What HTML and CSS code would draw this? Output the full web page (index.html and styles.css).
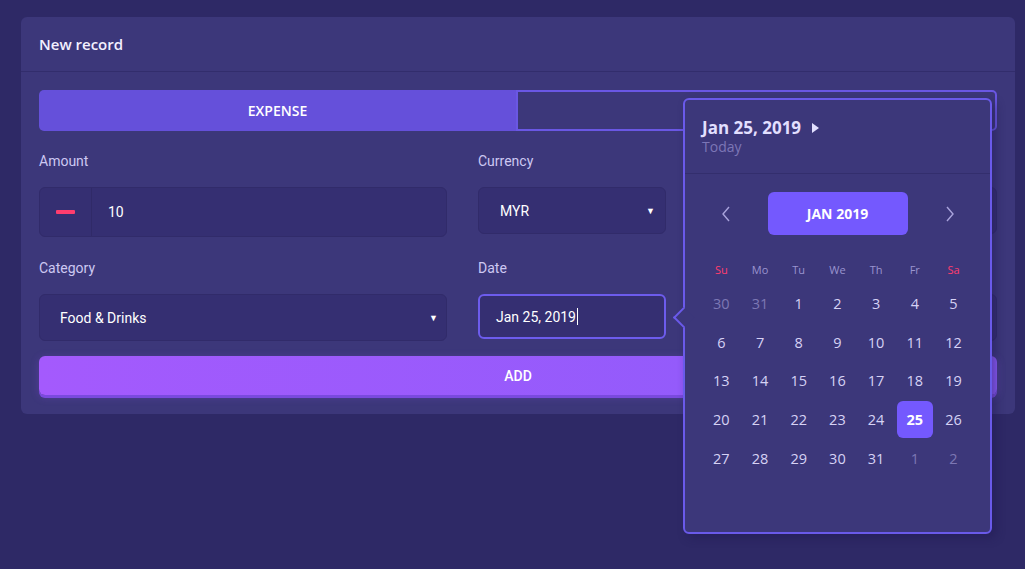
FILE: index.html
```html
<!DOCTYPE html>
<html>
<head>
<meta charset="utf-8">
<link rel="stylesheet" href="styles.css">
</head>
<body>
<div class="card">
  <div class="card-header">New record</div>
  <div class="card-body">
    <div class="toggle">
      <div class="tog tog-active">EXPENSE</div>
      <div class="tog tog-off"></div>
    </div>
    <div class="row">
      <div class="col c1">
        <div class="label">Amount</div>
        <div class="field amount">
          <div class="sign"><span class="minus"></span></div>
          <div class="val">10</div>
        </div>
      </div>
      <div class="col c2">
        <div class="label">Currency</div>
        <div class="field select"><span>MYR</span><span class="tri">▼</span></div>
      </div>
      <div class="col c3">
        <div class="label"></div>
        <div class="field select"></div>
      </div>
    </div>
    <div class="row row2">
      <div class="col c1">
        <div class="label">Category</div>
        <div class="field select sel2"><span>Food &amp; Drinks</span><span class="tri">▼</span></div>
      </div>
      <div class="col c2">
        <div class="label">Date</div>
        <div class="field date"><span>Jan 25, 2019</span><span class="caret"></span></div>
      </div>
      <div class="col c3">
        <div class="label"></div>
        <div class="field select sel2"></div>
      </div>
    </div>
    <div class="add">ADD</div>
  </div>
</div>

<div class="picker">
  <div class="pk-arrow"></div>
  <div class="pk-head">
    <div class="pk-date">Jan 25, 2019 <span class="pk-play"></span></div>
    <div class="pk-today">Today</div>
  </div>
  <div class="pk-nav">
    <svg class="chev" width="10" height="16" viewBox="0 0 10 16"><path d="M8 1 L2 8 L8 15" fill="none" stroke="#a9a3dc" stroke-width="1.4"/></svg>
    <div class="pk-month">JAN 2019</div>
    <svg class="chev" width="10" height="16" viewBox="0 0 10 16"><path d="M2 1 L8 8 L2 15" fill="none" stroke="#a9a3dc" stroke-width="1.4"/></svg>
  </div>
  <div class="pk-grid">
    <div class="wd red">Su</div><div class="wd">Mo</div><div class="wd">Tu</div><div class="wd">We</div><div class="wd">Th</div><div class="wd">Fr</div><div class="wd red">Sa</div>
    <div class="d mute">30</div><div class="d mute">31</div><div class="d">1</div><div class="d">2</div><div class="d">3</div><div class="d">4</div><div class="d">5</div>
    <div class="d">6</div><div class="d">7</div><div class="d">8</div><div class="d">9</div><div class="d">10</div><div class="d">11</div><div class="d">12</div>
    <div class="d">13</div><div class="d">14</div><div class="d">15</div><div class="d">16</div><div class="d">17</div><div class="d">18</div><div class="d">19</div>
    <div class="d">20</div><div class="d">21</div><div class="d">22</div><div class="d">23</div><div class="d">24</div><div class="d sel"><span>25</span></div><div class="d">26</div>
    <div class="d">27</div><div class="d">28</div><div class="d">29</div><div class="d">30</div><div class="d">31</div><div class="d mute">1</div><div class="d mute">2</div>
  </div>
</div>
</body>
</html>
```
FILE: styles.css
```css
* { box-sizing: border-box; }
html, body { margin: 0; padding: 0; }
body {
  background: #2e2966;
  width: 1025px;
  height: 569px;
  overflow: hidden;
  font-family: Roboto, "Liberation Sans", sans-serif;
  color: #ffffff;
  padding: 17px 0 0 21px;
  position: relative;
}
.card {
  width: 994px;
  background: #3c377a;
  border-radius: 6px;
}
.card-header {
  height: 55px;
  padding: 0 18px;
  display: flex;
  align-items: center;
  font-family: "Open Sans", sans-serif;
  font-size: 15px;
  font-weight: 600;
  color: #f2f0ff;
  border-bottom: 1px solid #322d6c;
}
.card-body {
  padding: 18px 18px 19px;
}
.toggle {
  display: flex;
  height: 41px;
}
.tog {
  flex: 1;
  display: flex;
  align-items: center;
  justify-content: center;
  font-family: "Open Sans", sans-serif;
  font-size: 14px;
  font-weight: 600;
}
.tog-active {
  background: #6550da;
  border-radius: 5px 0 0 5px;
}
.tog-off {
  border: 2px solid #6a57e4;
  border-radius: 0 5px 5px 0;
  color: #8d85d8;
}
.row {
  display: flex;
  gap: 31px;
  margin-top: 21px;
}
.row2 { margin-top: 22px; }
.col { display: flex; flex-direction: column; }
.c1 { width: 408px; }
.c2 { width: 188px; }
.c3 { width: 300px; }
.label {
  font-size: 14px;
  color: #cdc8f2;
  height: 18px;
  line-height: 18px;
  margin-bottom: 17px;
}
.field {
  background: #352f72;
  border: 1px solid #312b6a;
  border-radius: 6px;
  display: flex;
  align-items: center;
  font-size: 14px;
  color: #ffffff;
}
.amount { height: 50px; }
.sign {
  width: 52px;
  height: 100%;
  border-right: 1px solid #302a68;
  display: flex;
  align-items: center;
  justify-content: center;
}
.minus {
  width: 19px;
  height: 4px;
  background: #ff3d6e;
  border-radius: 1px;
}
.val { padding-left: 16px; }
.select {
  height: 47px;
  justify-content: space-between;
  padding: 0 10px 0 21px;
}
.sel2 { padding-left: 20px; padding-right: 8px; }
.tri { font-size: 9px; color: #ffffff; }
.date {
  height: 45px;
  border: 2px solid #6d5ced;
  padding-left: 16px;
}
.caret {
  display: inline-block;
  width: 1px;
  height: 17px;
  background: #ffffff;
  margin-left: 1px;
}
.add {
  margin-top: 15px;
  height: 39px;
  border-radius: 6px;
  background: linear-gradient(90deg, #a45afd 0%, #8c5bfa 100%);
  box-shadow: 0 3px 0 #7a4ade, 0 2px 8px rgba(160, 90, 250, 0.25);
  display: flex;
  align-items: center;
  justify-content: center;
  font-size: 14px;
  font-weight: 500;
}
.picker {
  position: absolute;
  left: 683px;
  top: 98px;
  width: 309px;
  height: 436px;
  background: #3c377a;
  border: 2px solid #6a5aea;
  border-radius: 6px;
  box-shadow: 4px 4px 10px rgba(30, 25, 80, 0.45);
  font-family: "Open Sans", sans-serif;
}
.pk-arrow {
  position: absolute;
  left: -9px;
  top: 210px;
  width: 15px;
  height: 15px;
  background: #3c377a;
  border-left: 2px solid #6a5aea;
  border-bottom: 2px solid #6a5aea;
  transform: rotate(45deg);
}
.pk-head {
  height: 74px;
  padding: 16px 17px 0;
  border-bottom: 1px solid #332e6d;
}
.pk-date {
  font-size: 17px;
  font-weight: 700;
  color: #e2dfff;
  line-height: 22px;
  display: flex;
  align-items: center;
  margin-top: 1px;
}
.pk-play {
  display: inline-block;
  margin-left: 11px;
  width: 0;
  height: 0;
  border-top: 5px solid transparent;
  border-bottom: 5px solid transparent;
  border-left: 7px solid #e2dfff;
}
.pk-today {
  font-size: 14px;
  color: #7c76b6;
  line-height: 16px;
}
.pk-nav {
  display: flex;
  align-items: center;
  justify-content: center;
  gap: 37px;
  margin-top: 18px;
  height: 43px;
}
.pk-month {
  width: 140px;
  height: 43px;
  background: #7459fe;
  border-radius: 6px;
  display: flex;
  align-items: center;
  justify-content: center;
  font-size: 14px;
  font-weight: 700;
  color: #ffffff;
}
.pk-grid {
  display: grid;
  grid-template-columns: repeat(7, 38.7px);
  grid-template-rows: 30px;
  grid-auto-rows: 38.7px;
  padding: 0 17px;
  margin-top: 19px;
}
.wd {
  display: flex;
  align-items: center;
  justify-content: center;
  font-size: 11px;
  color: #9a94cf;
}
.wd.red { color: #ff3d6e; }
.d {
  display: flex;
  align-items: center;
  justify-content: center;
  font-size: 14.5px;
  color: #d6d2f5;
}
.d.mute { color: #7d77b4; }
.d.sel span {
  width: 36px;
  height: 37px;
  border-radius: 6px;
  background: #7459fe;
  display: flex;
  align-items: center;
  justify-content: center;
  font-weight: 700;
  color: #ffffff;
}
```
